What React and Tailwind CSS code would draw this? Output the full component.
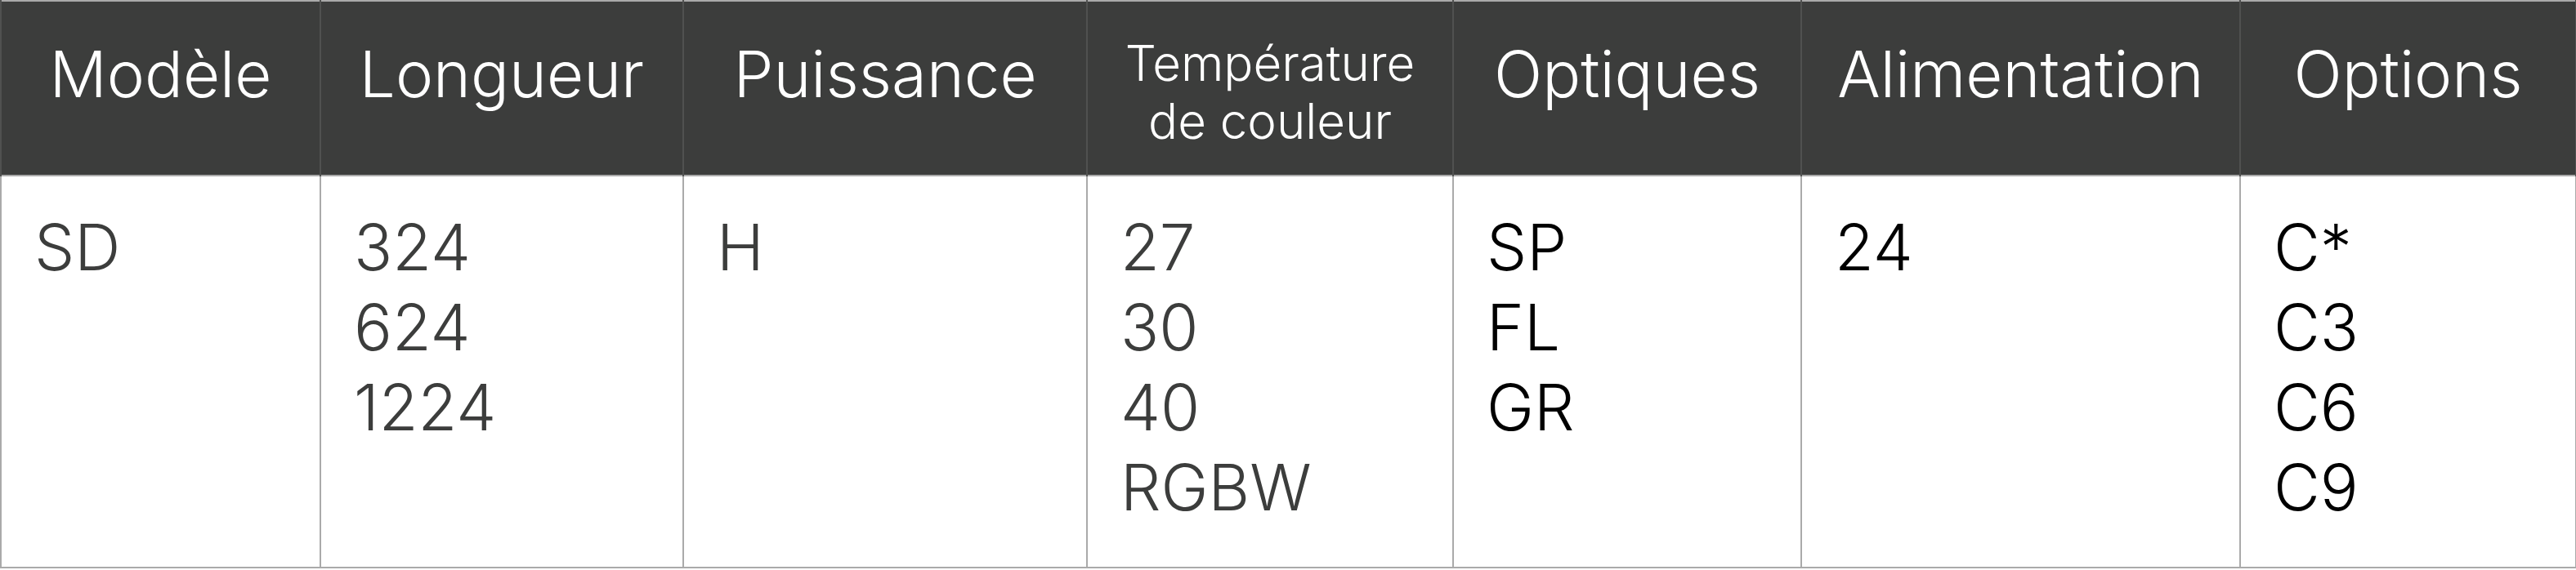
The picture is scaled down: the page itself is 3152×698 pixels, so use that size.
const headers = [
  { label: 'Modèle', w: 'w-[391px]' },
  { label: 'Longueur', w: 'w-[444px]' },
  { label: 'Puissance', w: 'w-[494px]' },
  { label: 'Température de couleur', w: 'w-[448px]', small: true },
  { label: 'Optiques', w: 'w-[426px]' },
  { label: 'Alimentation', w: 'w-[537px]' },
  { label: 'Options', w: 'w-[411px]' },
]

const cells = [
  { lines: ['SD'], dark: false },
  { lines: ['324', '624', '1224'], dark: false },
  { lines: ['H'], dark: false },
  { lines: ['27', '30', '40', 'RGBW'], dark: false },
  { lines: ['SP', 'FL', 'GR'], dark: true },
  { lines: ['24'], dark: true },
  { lines: ['C*', 'C3', 'C6', 'C9'], dark: true },
]

export default function App() {
  return (
    <div className="w-[3152px] bg-white font-['Inter','Noto_Sans',sans-serif]">
      <table className="w-[3151px] table-fixed border-collapse border-2 border-[#aaaaaa]">
        <colgroup>
          {headers.map((h) => (
            <col key={h.label} className={h.w} />
          ))}
        </colgroup>
        <thead>
          <tr className="h-[214px] bg-[#3c3d3c]">
            {headers.map((h) => (
              <th
                key={h.label}
                className="border-x-2 border-[#505150] px-2 pt-[40px] align-top font-light text-white"
              >
                {h.small ? (
                  <span className="block text-[60px] leading-[71px]">
                    Température
                    <br />
                    de couleur
                  </span>
                ) : (
                  <span className="block text-[78px] leading-[98px]">{h.label}</span>
                )}
              </th>
            ))}
          </tr>
        </thead>
        <tbody>
          <tr className="h-[480px] border-t-2 border-[#aaaaaa]">
            {cells.map((c, i) => (
              <td
                key={i}
                className={
                  'border-x-2 border-[#aaaaaa] pl-[40px] pt-[38px] align-top text-[78px] font-light leading-[98px] ' +
                  (c.dark ? 'text-black' : 'text-[#3c3d3c]')
                }
              >
                {c.lines.map((l) => (
                  <div key={l}>{l}</div>
                ))}
              </td>
            ))}
          </tr>
        </tbody>
      </table>
    </div>
  )
}
